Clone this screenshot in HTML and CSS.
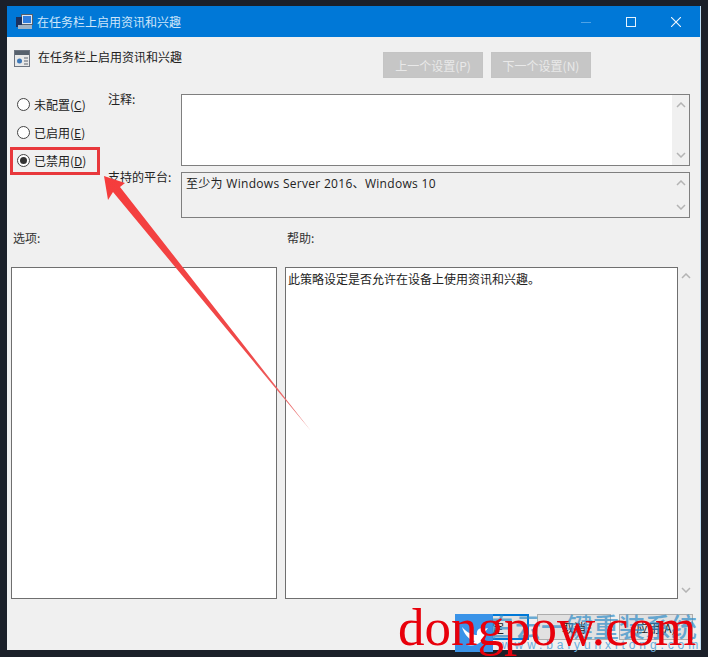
FILE: index.html
```html
<!DOCTYPE html>
<html lang="zh-CN">
<head>
    <meta charset="UTF-8">
    <meta name="viewport" content="width=device-width, initial-scale=1.0">
    <title>在任务栏上启用资讯和兴趣</title>
    <link rel="stylesheet" href="styles.css">
</head>
<body>
    <div class="window">
        <div class="titlebar">
            <svg class="title-icon" width="17" height="16" viewBox="0 0 17 16">
                <rect x="5.5" y="0.5" width="11" height="10" fill="#dfe6f0" stroke="#55606e"/>
                <rect x="7" y="2" width="8" height="7" fill="#2f7fe0"/>
                <rect x="0" y="3" width="6" height="10" fill="#1b3260"/>
                <rect x="2" y="11" width="14" height="4" fill="#9fb2c4"/>
            </svg>
            <span class="title-text">在任务栏上启用资讯和兴趣</span>
            <div class="win-buttons">
                <svg width="10" height="10" viewBox="0 0 10 10"><path d="M0 5.5H10" stroke="#4fa3e6"/></svg>
                <svg width="10" height="10" viewBox="0 0 10 10"><rect x="0.5" y="0.5" width="9" height="9" fill="none" stroke="#e6f3fd"/></svg>
                <svg width="10" height="10" viewBox="0 0 10 10"><path d="M0 0L10 10M10 0L0 10" stroke="#f2f8fd" stroke-width="1.1"/></svg>
            </div>
        </div>

        <div class="content">
            <div class="header-row">
                <svg class="policy-icon" width="16" height="17" viewBox="0 0 16 17">
                    <rect x="0.5" y="0.5" width="15" height="16" fill="#e8e8e8" stroke="#6d7480"/>
                    <rect x="1" y="1" width="14" height="4" fill="#56606c"/>
                    <circle cx="5.5" cy="11" r="2.5" fill="#3d78b8"/>
                    <path d="M10 8H14M10 11H14M10 14H14" stroke="#5d6570"/>
                </svg>
                <span class="policy-name">在任务栏上启用资讯和兴趣</span>
                <div class="nav-buttons">
                    <button class="nav-btn" type="button">上一个设置(P)</button>
                    <button class="nav-btn" type="button">下一个设置(N)</button>
                </div>
            </div>

            <div class="settings">
                <div class="radios">
                    <label class="radio"><span class="dot"></span><span>未配置(<u>C</u>)</span></label>
                    <label class="radio"><span class="dot"></span><span>已启用(<u>E</u>)</span></label>
                    <label class="radio"><span class="dot checked"></span><span>已禁用(<u>D</u>)</span></label>
                </div>
                <div class="fields">
                    <div class="field comment">
                        <span class="field-label">注释:</span>
                        <div class="box white">
                            <div class="box-text"></div>
                            <div class="scroll">
                                <svg width="10" height="6" viewBox="0 0 10 6"><path d="M1 5L5 1L9 5" fill="none" stroke="#b4b4b4" stroke-width="1.5"/></svg>
                                <svg width="10" height="6" viewBox="0 0 10 6"><path d="M1 1L5 5L9 1" fill="none" stroke="#b4b4b4" stroke-width="1.5"/></svg>
                            </div>
                        </div>
                    </div>
                    <div class="field platform">
                        <span class="field-label">支持的平台:</span>
                        <div class="box">
                            <div class="box-text">至少为 Windows Server 2016、Windows 10</div>
                            <div class="scroll">
                                <svg width="10" height="6" viewBox="0 0 10 6"><path d="M1 5L5 1L9 5" fill="none" stroke="#b4b4b4" stroke-width="1.5"/></svg>
                                <svg width="10" height="6" viewBox="0 0 10 6"><path d="M1 1L5 5L9 1" fill="none" stroke="#b4b4b4" stroke-width="1.5"/></svg>
                            </div>
                        </div>
                    </div>
                </div>
            </div>

            <div class="section-labels">
                <span class="options-label">选项:</span>
                <span>帮助:</span>
            </div>

            <div class="panels">
                <div class="panel options"></div>
                <div class="panel help">此策略设定是否允许在设备上使用资讯和兴趣。</div>
                <div class="panel-scroll">
                    <svg width="10" height="6" viewBox="0 0 10 6"><path d="M1 5L5 1L9 5" fill="none" stroke="#b4b4b4" stroke-width="1.5"/></svg>
                    <svg width="10" height="6" viewBox="0 0 10 6"><path d="M1 1L5 5L9 1" fill="none" stroke="#b4b4b4" stroke-width="1.5"/></svg>
                </div>
            </div>

            <div class="footer">
                <button class="foot-btn primary" type="button">确定</button>
                <button class="foot-btn" type="button">取消</button>
                <button class="foot-btn" type="button">应用(A)</button>
            </div>
        </div>
    </div>

    <!-- annotation and watermark sit on top of the screenshot -->
    <div class="red-box"></div>
    <svg class="arrow" width="708" height="657" viewBox="0 0 708 657">
        <defs>
            <linearGradient id="arrowFill" x1="0" y1="0" x2="1" y2="1">
                <stop offset="0" stop-color="#f53c3c"/>
                <stop offset="0.7" stop-color="#ef4a4a"/>
                <stop offset="1" stop-color="#e98080"/>
            </linearGradient>
        </defs>
        <polygon points="104,176 125,183 120,187 311,431 113,192 108,200" fill="url(#arrowFill)"/>
    </svg>

    <div class="mark-logo">
        <svg width="38" height="38" viewBox="0 0 38 38">
            <rect width="38" height="38" fill="#3a93e8"/>
            <path d="M7 13C12 19 18 21 22 21C21 16 25 13 29 15L33 14L30 18C30 27 22 33 12 31C16 30 18 29 20 27C14 26 9 20 7 13Z" fill="#fff"/>
        </svg>
    </div>
    <div class="mark-cn">白云一键重装系统</div>
    <div class="mark-url">www.baiyunxitong.com</div>
    <div class="mark-red">dongpow.com</div>
</body>
</html>
```

FILE: styles.css
```css
html, body {
    margin: 0;
    height: 657px;
    overflow: hidden;
}

body {
    position: relative;
    box-sizing: border-box;
    padding: 6px 7px 7px 7px;
    background-color: #1b2029;
    font-family: "Noto Sans CJK SC", "Noto Sans", sans-serif;
    font-size: 12px;
    color: #222;
}

.window {
    height: 644px;
    box-sizing: border-box;
    background-color: #f0f0f0;
    border-right: 1px solid #bcdcf3;
    display: flex;
    flex-direction: column;
}

.titlebar {
    flex: none;
    height: 31px;
    background-color: #0078d7;
    display: flex;
    align-items: center;
    padding-left: 9px;
    color: #cfe6fa;
}

.title-icon {
    margin-right: 4px;
}

.title-text {
    font-size: 12px;
}

.win-buttons {
    margin-left: auto;
    margin-right: 19px;
    display: flex;
    gap: 35px;
}

.content {
    flex: 1;
    display: flex;
    flex-direction: column;
    padding: 0 10px 0 4px;
}

.header-row {
    display: flex;
    align-items: flex-start;
    height: 57px;
    padding: 13px 0 0 3px;
    box-sizing: border-box;
}

.policy-icon {
    margin-right: 8px;
}

.policy-name {
    line-height: 14px;
}

.nav-buttons {
    display: flex;
    gap: 8px;
    margin-left: 201px;
    margin-top: 2px;
}

.nav-btn {
    width: 100px;
    height: 26px;
    padding: 0;
    border: 1px solid #c4c4c4;
    background-color: #c6c6c6;
    color: #e9e9e9;
    font-family: inherit;
    font-size: 12px;
}

.settings {
    display: flex;
}

.radios {
    width: 97px;
    padding: 0 0 0 6px;
    box-sizing: border-box;
    display: flex;
    flex-direction: column;
    gap: 8px;
}

.radio {
    display: flex;
    align-items: center;
    height: 20px;
    gap: 4px;
}

.dot {
    width: 11px;
    height: 11px;
    border: 1px solid #444;
    border-radius: 50%;
    background-color: #fff;
    display: flex;
    align-items: center;
    justify-content: center;
}

.dot.checked::after {
    content: "";
    width: 7px;
    height: 7px;
    border-radius: 50%;
    background-color: #333;
}

.fields {
    flex: 1;
    display: flex;
    flex-direction: column;
    gap: 6px;
}

.field {
    display: flex;
}

.field-label {
    width: 73px;
    flex: none;
    line-height: 10px;
}

.comment .box {
    height: 72px;
}

.platform .box {
    height: 46px;
}

.box {
    flex: 1;
    box-sizing: border-box;
    border: 1px solid #7f7f7f;
    display: flex;
    background-color: #f0f0f0;
}

.box.white .box-text {
    background-color: #fff;
}

.box-text {
    flex: 1;
    padding: 2px 4px;
    font-family: "Open Sans", "Noto Sans CJK SC", sans-serif;
    font-size: 12px;
    line-height: 17px;
    letter-spacing: 0.3px;
}

.scroll {
    width: 17px;
    flex: none;
    display: flex;
    flex-direction: column;
    align-items: center;
    justify-content: space-between;
    padding: 7px 0;
    box-sizing: border-box;
    background-color: #f0f0f0;
}

.section-labels {
    display: flex;
    height: 49px;
    padding: 12px 0 0 2px;
    box-sizing: border-box;
    line-height: 16px;
    color: #333;
}

.options-label {
    width: 274px;
}

.panels {
    display: flex;
    flex: none;
    height: 332px;
}

.panel {
    flex: none;
    box-sizing: border-box;
    border: 1px solid #6f6f6f;
    background-color: #fff;
}

.options {
    width: 266px;
    margin-right: 8px;
}

.help {
    width: 393px;
    padding: 2px 2px;
    line-height: 17px;
}

.panel-scroll {
    flex: none;
    width: 16px;
    display: flex;
    flex-direction: column;
    align-items: center;
    justify-content: space-between;
    padding: 6px 0;
    box-sizing: border-box;
}

.footer {
    display: flex;
    gap: 8px;
    padding: 15px 0 0 444px;
}

.foot-btn {
    flex: none;
    width: 74px;
    height: 26px;
    padding: 0;
    border: 1px solid #adadad;
    background-color: #e1e1e1;
    color: #222;
    font-family: inherit;
    font-size: 12px;
}

.foot-btn.primary {
    border: 2px solid #0078d7;
}

.red-box {
    position: absolute;
    left: 10px;
    top: 147px;
    width: 84px;
    height: 22px;
    border: 3px solid #e8383c;
}

.arrow {
    position: absolute;
    left: 0;
    top: 0;
}

.mark-logo {
    position: absolute;
    left: 455px;
    top: 614px;
    height: 38px;
}

.mark-cn {
    position: absolute;
    left: 489px;
    top: 609px;
    font-size: 26px;
    line-height: 34px;
    font-weight: 500;
    color: rgba(46, 140, 200, 0.7);
    white-space: nowrap;
}

.mark-url {
    position: absolute;
    left: 502px;
    top: 638px;
    font-family: "Liberation Sans", sans-serif;
    font-size: 12px;
    line-height: 14px;
    letter-spacing: 3.9px;
    color: #6aaedc;
    white-space: nowrap;
}

.mark-red {
    position: absolute;
    left: 398px;
    top: 597px;
    font-family: "Liberation Serif", serif;
    font-size: 53px;
    line-height: 60px;
    color: #e8000b;
    white-space: nowrap;
}
```
